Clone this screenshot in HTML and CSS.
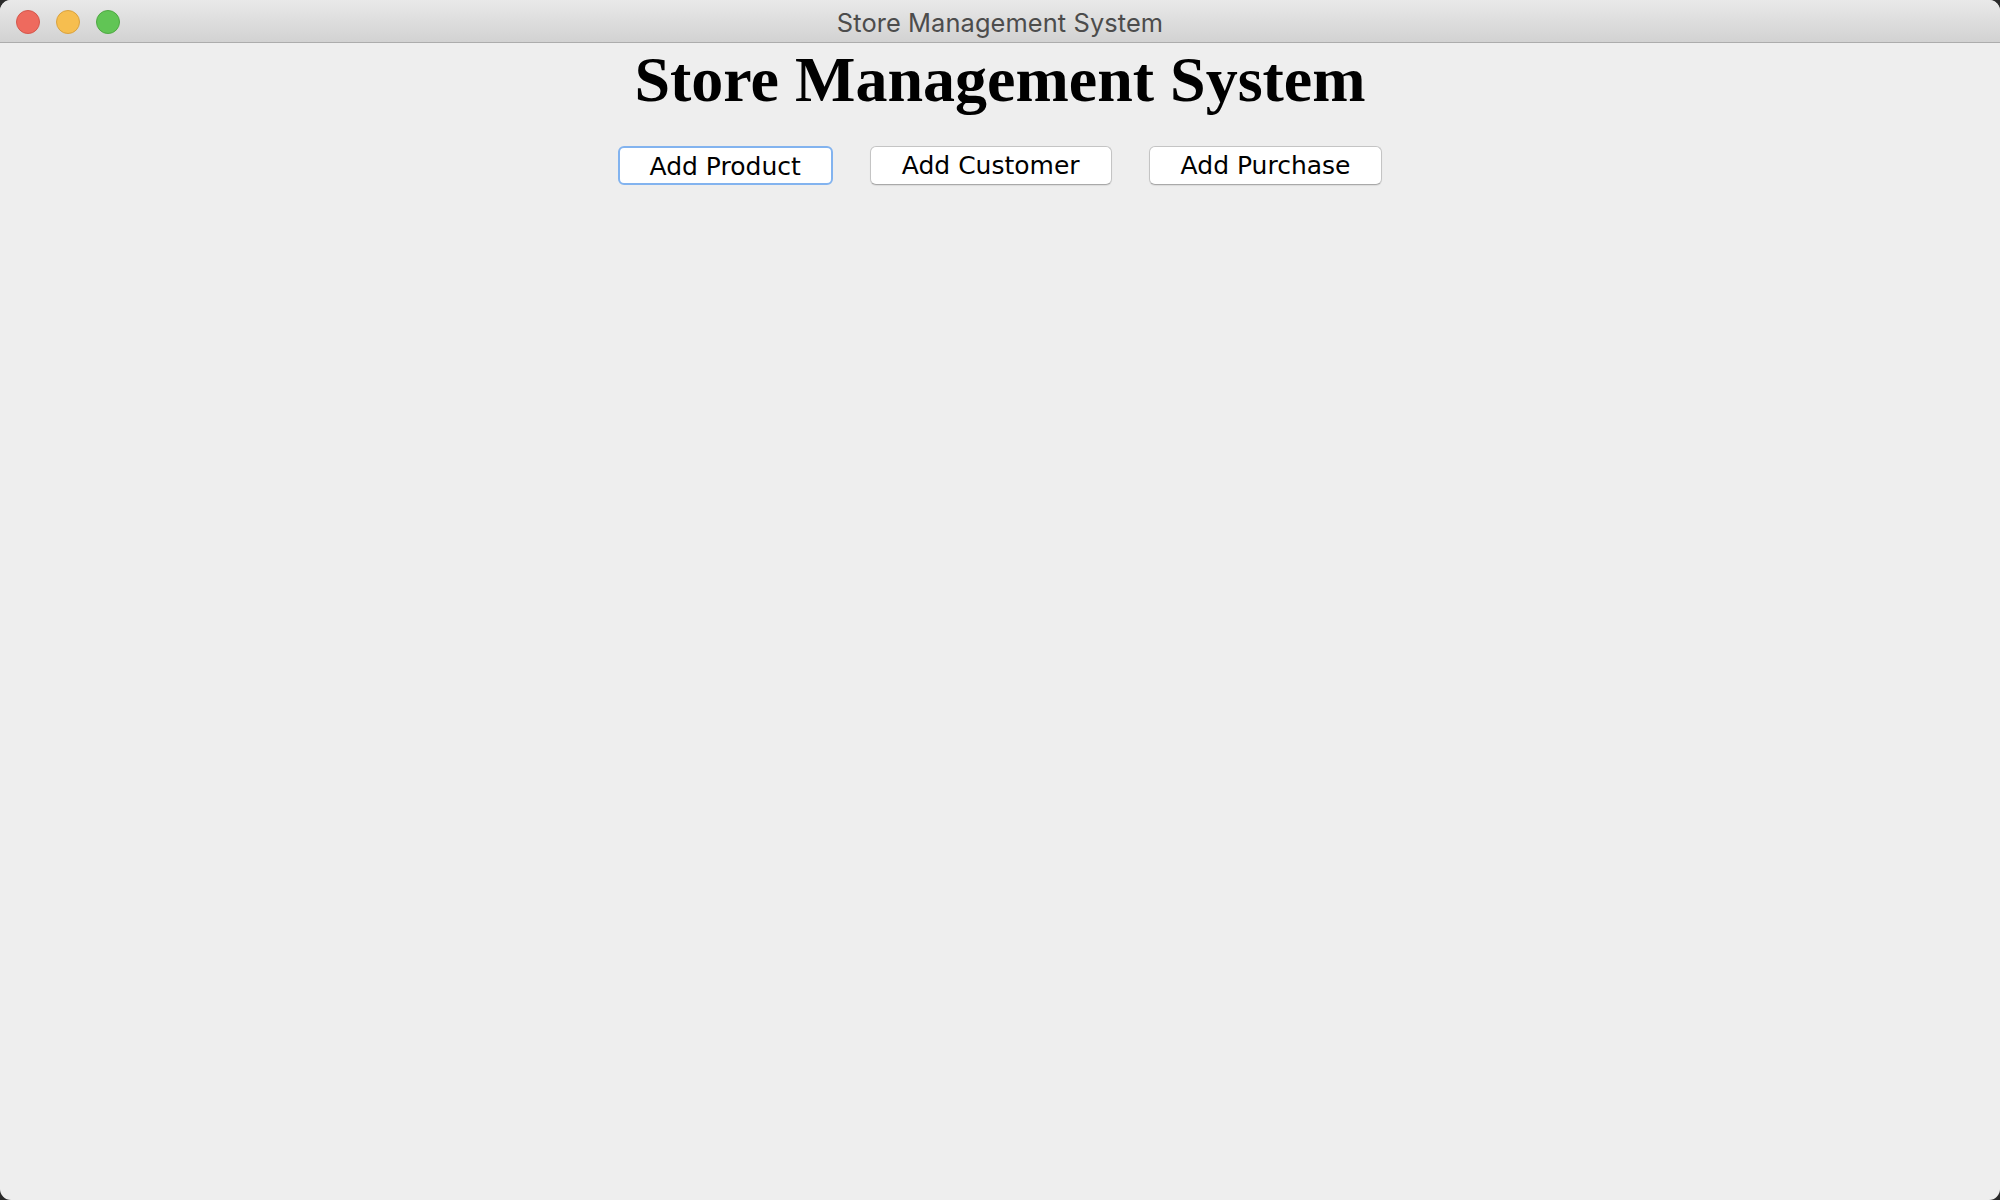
FILE: index.html
```html
<!DOCTYPE html>
<html>
<head>
<meta charset="utf-8">
<title>Store Management System</title>
<link rel="stylesheet" href="styles.css">
</head>
<body>
<div class="window">
  <div class="titlebar">
    <div class="lights">
      <span class="light red"></span>
      <span class="light yellow"></span>
      <span class="light green"></span>
    </div>
    <div class="title">Store Management System</div>
  </div>
  <div class="content">
    <h1 class="heading">Store Management System</h1>
    <div class="buttons">
      <button class="btn focused">Add Product</button>
      <button class="btn">Add Customer</button>
      <button class="btn">Add Purchase</button>
    </div>
  </div>
</div>
</body>
</html>
```

FILE: styles.css
```css
html, body {
  margin: 0;
  padding: 0;
  width: 2000px;
  height: 1200px;
  background: #2a2a2a;
  overflow: hidden;
}

.window {
  width: 2000px;
  height: 1200px;
  border-radius: 11px;
  overflow: hidden;
  background: #eeeeee;
  display: flex;
  flex-direction: column;
}

.titlebar {
  position: relative;
  height: 43px;
  box-sizing: border-box;
  flex: none;
  background: linear-gradient(#e9e9e9, #d2d2d2);
  border-bottom: 1px solid #acacac;
  display: flex;
  align-items: center;
  justify-content: center;
}

.lights {
  position: absolute;
  left: 16px;
  top: 10px;
  display: flex;
  gap: 16px;
}

.light {
  width: 22px;
  height: 22px;
  border-radius: 50%;
  border: 1px solid;
}

.red { background: #ee6a5e; border-color: #d4574c; }
.yellow { background: #f6be4f; border-color: #d9a23f; }
.green { background: #61c555; border-color: #4fa843; }

.title {
  font-family: Inter, "Liberation Sans", sans-serif;
  font-size: 25.4px;
  color: #4c4c4c;
  letter-spacing: 0.1px;
  padding-top: 2px;
}

.content {
  flex: 1;
  display: flex;
  flex-direction: column;
  align-items: center;
}

.heading {
  margin: 1px 0 0 0;
  font-family: "Liberation Serif", "Times New Roman", serif;
  font-weight: bold;
  font-size: 64px;
  line-height: 71px;
  color: #000;
}

.buttons {
  margin-top: 31px;
  display: flex;
  gap: 37px;
}

.btn {
  height: 39px;
  box-sizing: border-box;
  padding: 0 31px;
  background: #ffffff;
  border: 1px solid #c4c4c4;
  border-bottom-color: #a9a9a9;
  border-radius: 6px;
  box-shadow: 0 1px 1px rgba(0,0,0,0.08);
  font-family: "DejaVu Sans", Verdana, sans-serif;
  font-size: 25px;
  color: #000;
  line-height: 37px;
}

.btn.focused {
  border: 2px solid #82b3ef;
  box-shadow: none;
  padding: 0 30px;
}
```
